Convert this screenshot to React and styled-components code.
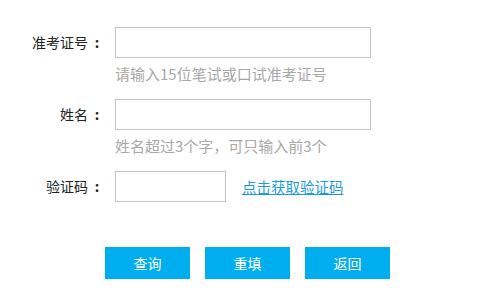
import React from "react";
import styled, { createGlobalStyle } from "styled-components";

const GlobalStyle = createGlobalStyle`
  html, body {
    margin: 0;
    padding: 0;
    background: #ffffff;
    font-family: "Noto Sans CJK SC", "Noto Sans", sans-serif;
  }
`;

const Form = styled.form`
  width: 480px;
  height: 300px;
  box-sizing: border-box;
  padding-top: 27px;
`;

const Field = styled.div`
  display: grid;
  grid-template-columns: 106px auto;
  column-gap: 9px;
  align-items: center;
  margin-bottom: ${(p) => p.$gap}px;
`;

const Label = styled.label`
  display: flex;
  justify-content: flex-end;
  font-size: 14px;
  color: #222;
  line-height: 31px;
`;

const Colon = styled.span`
  width: 18px;
  text-align: center;
  font-weight: 700;
`;

const Controls = styled.div`
  display: flex;
  align-items: center;
  gap: 16px;
`;

const Input = styled.input`
  box-sizing: border-box;
  width: ${(p) => p.$w}px;
  height: 31px;
  border: 1px solid #c4c4c4;
  outline: none;
  padding: 0 6px;
  font-size: 14px;
`;

const Hint = styled.div`
  grid-column: 2;
  margin-top: 6px;
  font-size: 15px;
  line-height: 19px;
  color: #a8a8a8;
`;

const Link = styled.a`
  font-size: 14.5px;
  color: #1a9be0;
  text-decoration: underline;
  cursor: pointer;
`;

const Buttons = styled.div`
  display: flex;
  gap: 15px;
  padding-left: 105px;
`;

const Button = styled.button`
  width: 85px;
  height: 32px;
  border: none;
  background: #00adef;
  color: #ffffff;
  font-family: inherit;
  font-size: 14px;
  cursor: pointer;
`;

export default function App() {
  return (
    <>
      <GlobalStyle />
      <Form>
        <Field $gap={16}>
          <Label>准考证号<Colon>:</Colon></Label>
          <Input $w={256} />
          <Hint>请输入15位笔试或口试准考证号</Hint>
        </Field>
        <Field $gap={16}>
          <Label>姓名<Colon>:</Colon></Label>
          <Input $w={256} />
          <Hint>姓名超过3个字，可只输入前3个</Hint>
        </Field>
        <Field $gap={45}>
          <Label>验证码<Colon>:</Colon></Label>
          <Controls>
            <Input $w={111} />
            <Link>点击获取验证码</Link>
          </Controls>
        </Field>
        <Buttons>
          <Button type="button">查询</Button>
          <Button type="button">重填</Button>
          <Button type="button">返回</Button>
        </Buttons>
      </Form>
    </>
  );
}
